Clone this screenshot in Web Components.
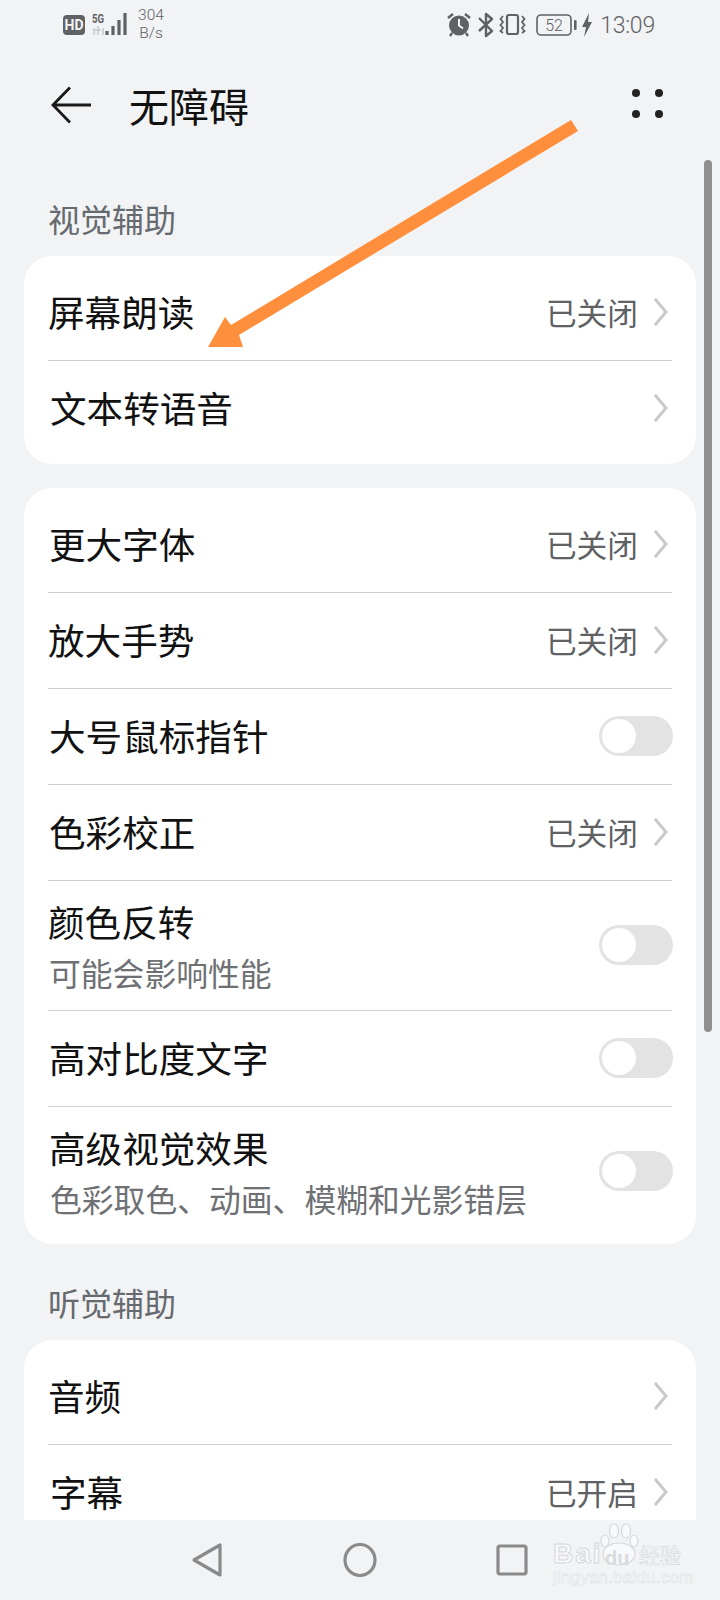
<!DOCTYPE html>
<html lang="zh">
<head>
<meta charset="utf-8">
<title>无障碍</title>
<style>
    html, body {
        margin: 0;
        height: 1600px;
        overflow: hidden;
        background: #f1f3f5;
        font-family: "Noto Sans CJK SC", "Noto Sans", sans-serif;
    }
    #page {
        position: relative;
        display: flex;
        flex-direction: column;
        height: 1600px;
    }
</style>
</head>
<body>
<div id="page">
    <status-bar></status-bar>
    <app-header>无障碍</app-header>
    <scroll-view>
        <section-title>视觉辅助</section-title>
        <setting-card>
            <setting-row status="已关闭" chevron>屏幕朗读</setting-row>
            <setting-row chevron inset="2">文本转语音</setting-row>
        </setting-card>
        <setting-card gap>
            <setting-row status="已关闭" chevron inset="1">更大字体</setting-row>
            <setting-row status="已关闭" chevron>放大手势</setting-row>
            <setting-row toggle inset="1">大号鼠标指针</setting-row>
            <setting-row status="已关闭" chevron inset="1">色彩校正</setting-row>
            <setting-row toggle>颜色反转<span slot="sub">可能会影响性能</span></setting-row>
            <setting-row toggle inset="1">高对比度文字</setting-row>
            <setting-row toggle inset="1">高级视觉效果<span slot="sub">色彩取色、动画、模糊和光影错层</span></setting-row>
        </setting-card>
        <section-title>听觉辅助</section-title>
        <setting-card>
            <setting-row chevron>音频</setting-row>
            <setting-row status="已开启" chevron inset="2">字幕</setting-row>
        </setting-card>
    </scroll-view>
    <nav-bar></nav-bar>
    <scroll-thumb></scroll-thumb>
    <note-arrow></note-arrow>
    <baidu-mark></baidu-mark>
</div>

<script>
const define = (tagName, html) => {
    customElements.define(tagName, class extends HTMLElement {
        constructor() {
            super();
            this.attachShadow({ mode: 'open' }).innerHTML = html;
        }
    });
};

define('status-bar', `
    <style>
        :host {
            display: flex;
            flex: none;
            align-items: flex-start;
            height: 50px;
            color: #5f6164;
            font-family: Roboto, "Noto Sans", sans-serif;
        }
        svg { display: block; flex: none; }
        .left { margin: 9px 0 0 63px; }
        .rate {
            margin: 7px 0 0 8px;
            width: 28px;
            font-size: 15.500px;
            line-height: 17.500px;
            font-weight: 300;
            text-align: center;
        }
        .right { margin: 12px 0 0 auto; }
        .time {
            margin: 10px 65px 0 6px;
            font-size: 23px;
            line-height: 32px;
            font-weight: 300;
            letter-spacing: -0.2px;
        }
    </style>
    <svg class="left" width="66" height="30" viewBox="0 0 66 30">
        <rect x="0" y="6" width="22" height="20" rx="4" fill="#5f6164"/>
        <text x="11" y="21" font-family="Roboto, sans-serif" font-size="14" font-weight="700" fill="#f1f3f5" text-anchor="middle">HD</text>
        <text x="29" y="14" font-family="Roboto, sans-serif" font-size="12" font-weight="700" fill="#5f6164" textLength="12" lengthAdjust="spacingAndGlyphs">5G</text>
        <path d="M31 19v7M35 17v9M38 21h-8M40 19v7" stroke="#c9cacc" stroke-width="1.600" fill="none"/>
        <path d="M44 22v4M50 17v9M56 11v15M62 4v22" stroke="#5f6164" stroke-width="3.200" fill="none"/>
    </svg>
    <div class="rate">304<br>B/s</div>
    <svg class="right" width="148" height="26" viewBox="-1 0 148 26">
        <!-- alarm -->
        <circle cx="12" cy="13.500" r="10" fill="#5f6164"/>
        <path d="M12 7v6.500l4 3" stroke="#f1f3f5" stroke-width="2" fill="none"/>
        <path d="M1 6l5-4M23 6l-5-4M5 21l-2 3M19 21l2 3" stroke="#5f6164" stroke-width="2.400" fill="none"/>
        <!-- bluetooth -->
        <path d="M32 6l13 13-6 5V2l6 5-13 12" stroke="#5f6164" stroke-width="2.400" fill="none" stroke-linejoin="round"/>
        <!-- vibrate -->
        <rect x="60" y="3" width="11" height="19" rx="2" stroke="#5f6164" stroke-width="2.200" fill="none"/>
        <path d="M56 4l-2.500 3 2.500 3-2.500 3 2.500 3-2.500 3 2.500 2M75 4l2.500 3-2.500 3 2.500 3-2.500 3 2.500 3-2.500 2" stroke="#5f6164" stroke-width="1.800" fill="none"/>
        <!-- battery -->
        <rect x="90" y="3" width="34" height="20" rx="4" stroke="#5f6164" stroke-width="1.600" fill="none"/>
        <text x="107" y="19" font-family="Roboto, sans-serif" font-size="16" font-weight="300" fill="#5f6164" text-anchor="middle">52</text>
        <rect x="127" y="8" width="2.600" height="10" rx="1" fill="#5f6164"/>
        <!-- charging bolt -->
        <path d="M142 1l-7 14h4l-2 10 8-15h-4z" fill="#5f6164"/>
    </svg>
    <span class="time">13:09</span>
`);

define('app-header', `
    <style>
        :host {
            display: flex;
            flex: none;
            align-items: center;
            height: 110px;
            color: #111;
        }
        svg { display: block; flex: none; }
        .back { margin: 0 0 0 51px; }
        .title {
            margin-left: 37px;
            font-size: 40px;
            line-height: 56px;
        }
        .more { margin: 0 56px 2px auto; }
    </style>
    <svg class="back" width="41" height="38" viewBox="0 0 41 38">
        <path d="M40 19H3M19 1.500L2 19l17 17.500" stroke="#1a1a1a" stroke-width="2.800" fill="none"/>
    </svg>
    <span class="title"><slot></slot></span>
    <svg class="more" width="32" height="30" viewBox="0 0 32 30">
        <circle cx="4" cy="4" r="4" fill="#222"/><circle cx="27" cy="4" r="4" fill="#222"/>
        <circle cx="4" cy="25" r="4" fill="#222"/><circle cx="27" cy="25" r="4" fill="#222"/>
    </svg>
`);

define('scroll-view', `
    <style>
        :host {
            display: block;
            flex: 1 1 0;
            min-height: 0;
            overflow: hidden;
        }
    </style>
    <slot></slot>
`);

define('section-title', `
    <style>
        :host {
            display: block;
            height: 96px;
            padding: 35px 0 0 48px;
            box-sizing: border-box;
            color: #666a6e;
            font-size: 32px;
            line-height: 46px;
        }
    </style>
    <slot></slot>
`);

define('setting-card', `
    <style>
        :host {
            display: block;
            margin: 0 24px;
            padding: 9px 0 8px;
            background: #fff;
            border-radius: 28px;
        }
        :host([gap]) { margin-top: 24px; }
        ::slotted(setting-row:not(:first-child)) {
            border-top: 1px solid #cfcfcf;
        }
    </style>
    <slot></slot>
`);

class SettingRow extends HTMLElement {
    constructor() {
        super();
        this.attachShadow({ mode: 'open' });
    }

    connectedCallback() {
        const status = this.getAttribute('status');
        const inset = +this.getAttribute('inset') || 0;
        const hasSub = !!this.querySelector('[slot="sub"]');
        this.shadowRoot.innerHTML = `
            <style>
                :host {
                    display: flex;
                    align-items: center;
                    min-height: 93px;
                    margin: 0 24px;
                    padding-bottom: 2px;
                    color: #111;
                }
                .text { flex: 1; min-width: 0; padding-left: ${inset}px; }
                .label {
                    display: block;
                    font-size: 36.600px;
                    line-height: 52px;
                    padding-top: ${hasSub ? 15 : 0}px;
                }
                .sub {
                    display: ${hasSub ? 'block' : 'none'};
                    margin: 2px 0 0 1px;
                    padding-bottom: 14px;
                    font-size: 31.800px;
                    line-height: 44px;
                    color: #6e7073;
                }
                .status {
                    font-size: 30.700px;
                    line-height: 44px;
                    color: #5f6164;
                }
                .chev { display: block; margin: 0 4px 0 15px; flex: none; }
                toggle-switch { flex: none; margin-right: -1px; }
            </style>
            <div class="text">
                <span class="label"><slot></slot></span>
                <span class="sub"><slot name="sub"></slot></span>
            </div>
            ${status ? `<span class="status">${status}</span>` : ''}
            ${this.hasAttribute('chevron') ? `
                <svg class="chev" width="15" height="30" viewBox="0 0 15 30">
                    <path d="M2 2l11 13L2 28" stroke="#c9c9c9" stroke-width="3" fill="none"/>
                </svg>` : ''}
            ${this.hasAttribute('toggle') ? '<toggle-switch></toggle-switch>' : ''}
        `;
    }
}
customElements.define('setting-row', SettingRow);

define('toggle-switch', `
    <style>
        :host {
            display: flex;
            align-items: center;
            width: 74px;
            height: 40px;
            padding: 0 3px;
            box-sizing: border-box;
            background: #e3e3e3;
            border-radius: 20px;
        }
        i {
            display: block;
            width: 34px;
            height: 34px;
            background: #fff;
            border-radius: 50%;
        }
    </style>
    <i></i>
`);

define('nav-bar', `
    <style>
        :host {
            display: block;
            flex: none;
            height: 80px;
            box-sizing: border-box;
            padding-top: 22px;
        }
        div {
            display: flex;
            align-items: center;
            height: 36px;
            padding-left: 191px;
        }
        svg { display: block; flex: none; }
    </style>
    <div>
        <svg width="32" height="36" viewBox="0 0 32 36" style="margin-right:120px">
            <path d="M29 3v30L3 18z" stroke="#8a8a8a" stroke-width="3.200" stroke-linejoin="round" fill="none"/>
        </svg>
        <svg width="34" height="36" viewBox="0 0 34 36" style="margin-right:119px">
            <ellipse cx="17" cy="18" rx="15" ry="15.500" stroke="#8a8a8a" stroke-width="3.200" fill="none"/>
        </svg>
        <svg width="32" height="32" viewBox="0 0 32 32">
            <rect x="2" y="2" width="28" height="28" rx="2" stroke="#8a8a8a" stroke-width="3.200" fill="none"/>
        </svg>
    </div>
`);

define('scroll-thumb', `
    <style>
        :host {
            position: absolute;
            left: 704px;
            top: 160px;
            width: 8px;
            height: 872px;
            background: #8f8f8f;
            border-radius: 4px;
        }
    </style>
`);

define('note-arrow', `
    <style>
        :host {
            position: absolute;
            left: 200px;
            top: 110px;
            width: 390px;
            height: 245px;
            pointer-events: none;
        }
        svg { display: block; }
    </style>
    <svg width="390" height="245" viewBox="200 110 390 245">
        <path d="M571 120L578 131 239 335 243 347 208 347 225 317 231 325z" fill="#ff8f3c"/>
    </svg>
`);

define('baidu-mark', `
    <style>
        :host {
            position: absolute;
            left: 552px;
            top: 1522px;
            width: 132px;
            height: 64px;
            font-family: "Liberation Sans", sans-serif;
            color: #f8f9fa;
            -webkit-text-stroke: 1px #d6d8da;
            pointer-events: none;
        }
        .paw { position: absolute; left: 47px; top: 0; }
        .brand, .du {
            position: absolute;
            font-weight: 700;
            white-space: nowrap;
        }
        .brand {
            left: 1px;
            top: 15px;
            font-size: 28px;
            line-height: 34px;
            letter-spacing: 2px;
        }
        .du {
            left: 53px;
            top: 24px;
            font-size: 20px;
            line-height: 24px;
            color: #d9dbdd;
            -webkit-text-stroke: 0;
        }
        .jy {
            position: absolute;
            left: 87px;
            top: 19px;
            font-family: "Noto Sans CJK SC", sans-serif;
            font-size: 21px;
            line-height: 26px;
            -webkit-text-stroke: 0.6px #d6d8da;
            white-space: nowrap;
        }
        .url {
            position: absolute;
            left: 1px;
            top: 47px;
            font-size: 17px;
            line-height: 18px;
            letter-spacing: 0.2px;
            -webkit-text-stroke: 0.4px #d6d8da;
            white-space: nowrap;
        }
    </style>
    <svg class="paw" width="40" height="44" viewBox="0 0 40 44">
        <g fill="#f8f9fa" stroke="#d6d8da" stroke-width="1.200">
            <ellipse cx="6" cy="19" rx="4" ry="6"/>
            <ellipse cx="15" cy="9" rx="4.500" ry="7"/>
            <ellipse cx="27" cy="9" rx="4.500" ry="7"/>
            <ellipse cx="35" cy="19" rx="4" ry="6"/>
            <ellipse cx="20" cy="32" rx="16" ry="11"/>
        </g>
    </svg>
    <span class="brand">Bai</span>
    <span class="du">du</span>
    <span class="jy">经验</span>
    <span class="url">jingyan.baidu.com</span>
`);
</script>
</body>
</html>
